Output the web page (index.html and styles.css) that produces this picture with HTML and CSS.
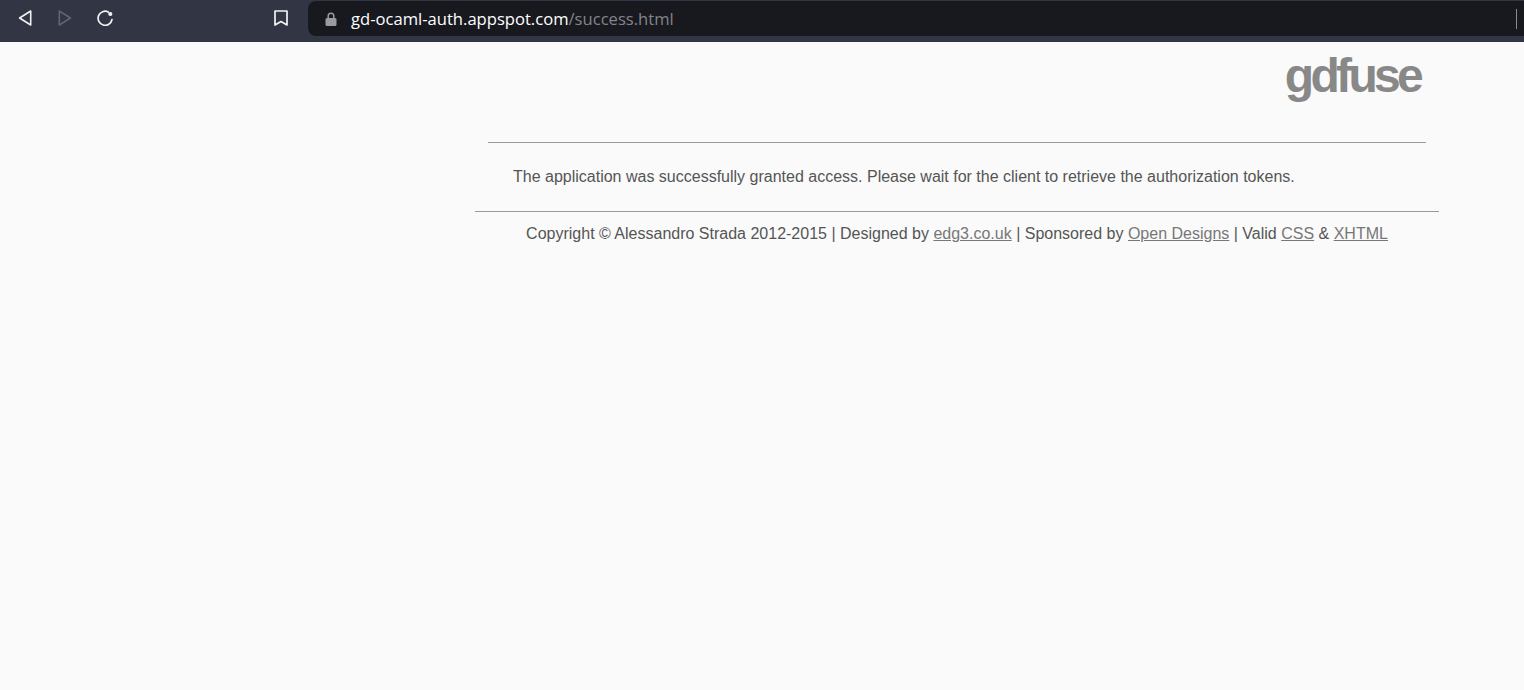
FILE: index.html
```html
<!DOCTYPE html>
<html lang="en">
<head>
<meta charset="utf-8">
<title>gdfuse</title>
<link rel="stylesheet" href="styles.css">
</head>
<body>
<header class="toolbar">
  <nav class="nav-buttons">
    <svg class="icon" viewBox="0 0 16 16"><path d="M13.700 1 2.600 8l11.100 7z" fill="none" stroke="#f2f2f4" stroke-width="1.600" stroke-linejoin="round"/></svg>
    <svg class="icon" viewBox="0 0 16 16"><path d="M2.300 1 13.400 8 2.300 15z" fill="none" stroke="#62646f" stroke-width="1.600" stroke-linejoin="round"/></svg>
    <svg class="icon" viewBox="0 0 16 16"><path d="M15 9.500A7 7 0 1 1 11.300 2" fill="none" stroke="#f2f2f4" stroke-width="1.700" stroke-linecap="round"/><circle cx="13.300" cy="4" r="2.100" fill="#f2f2f4"/></svg>
  </nav>
  <svg class="icon bookmark" viewBox="0 0 16 16"><path d="M2 1h12v14L8 11.500 2 15z" fill="none" stroke="#f2f2f4" stroke-width="1.700" stroke-linejoin="round"/></svg>
  <div class="address">
    <svg class="lock" viewBox="0 0 12 14"><path d="M3.200 6.500V4a2.800 2.800 0 0 1 5.600 0v2.500" fill="none" stroke="#9a9ba2" stroke-width="1.500"/><rect x="0.500" y="6" width="11" height="8" rx="1.500" fill="#9a9ba2"/></svg>
    <span class="url"><span class="host">gd-ocaml-auth.appspot.com</span>/success.html</span>
    <span class="caret"></span>
  </div>
</header>
<main class="page">
  <div class="logo">gdfuse</div>
  <div class="content">
    <p>The application was successfully granted access. Please wait for the client to retrieve the authorization tokens.</p>
  </div>
  <footer class="footer">
    Copyright © Alessandro Strada 2012-2015 | Designed by <a href="#">edg3.co.uk</a> | Sponsored by <a href="#">Open Designs</a> | Valid <a href="#">CSS</a> &amp; <a href="#">XHTML</a>
  </footer>
</main>
</body>
</html>
```
FILE: styles.css
```css
* { box-sizing: border-box; }
html, body { margin: 0; height: 100%; }
body {
  background: #fafafa;
  font-family: "Liberation Sans", Arial, sans-serif;
  color: #555;
  overflow: hidden;
}
.toolbar {
  display: flex;
  height: 42px;
  background: #323544;
  padding: 1px 0 6px 17px;
  align-items: stretch;
}
.nav-buttons {
  display: flex;
  align-items: center;
  gap: 24px;
  width: 256px;
  padding-bottom: 1px;
}
.icon { width: 16px; height: 16px; display: block; }
.bookmark { align-self: center; margin-bottom: 1px; }
.address {
  flex: 1;
  margin-left: 19px;
  display: flex;
  align-items: center;
  background: #18191f;
  border-radius: 8px 0 0 8px;
  padding-left: 17px;
  padding-right: 7px;
}
.lock { width: 12px; height: 14px; display: block; }
.url {
  margin-left: 14px;
  font-family: "Open Sans", sans-serif;
  font-size: 16.600px;
  color: #83848b;
  flex: 1;
}
.host { color: #fff; }
.caret { width: 1px; height: 20px; background: #8a8a8f; margin-top: 1px; }
.page {
  width: 964px;
  margin-left: 475px;
}
.logo {
  margin: 0 19px 0 13px;
  padding-top: 1px;
  text-align: right;
  font-size: 48px;
  font-weight: bold;
  letter-spacing: -3.700px;
  line-height: 65px;
  color: #888;
}
.content {
  margin: 34px 13px 0;
  border-top: 1px solid #999;
  padding: 25px 0 25px 25px;
}
.content p {
  margin: 0;
  font-size: 16px;
  line-height: 18px;
}
.footer {
  border-top: 1px solid #999;
  padding-top: 13px;
  text-align: center;
  font-size: 16px;
  line-height: 18px;
}
.footer a { color: #777; }
```
